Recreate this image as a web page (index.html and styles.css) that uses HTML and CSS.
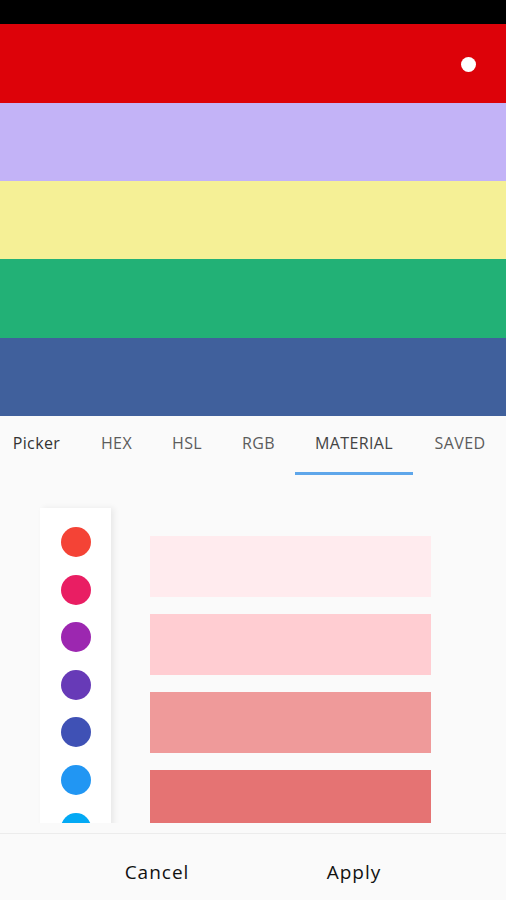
FILE: index.html
```html
<!DOCTYPE html>
<html>
<head>
<meta charset="utf-8">
<link rel="stylesheet" href="styles.css">
</head>
<body>
<div class="screen">
  <div class="status"></div>
  <div class="bands">
    <div class="band band-red"><span class="dot"></span></div>
    <div class="band band-lav"></div>
    <div class="band band-yel"></div>
    <div class="band band-grn"></div>
    <div class="band band-blu"></div>
  </div>
  <div class="tabs">
    <div class="tab tab-picker">Picker</div>
    <div class="tab tab-hex">HEX</div>
    <div class="tab tab-hsl">HSL</div>
    <div class="tab tab-rgb">RGB</div>
    <div class="tab tab-mat active">MATERIAL</div>
    <div class="tab tab-saved">SAVED</div>
  </div>
  <div class="content">
    <div class="sidebar">
      <span class="circle c-red"></span>
      <span class="circle c-pink"></span>
      <span class="circle c-purple"></span>
      <span class="circle c-dpurple"></span>
      <span class="circle c-indigo"></span>
      <span class="circle c-blue"></span>
      <span class="circle c-lblue"></span>
    </div>
    <div class="swatches">
      <div class="swatch s50"></div>
      <div class="swatch s100"></div>
      <div class="swatch s200"></div>
      <div class="swatch s300"></div>
      <div class="swatch s400"></div>
    </div>
  </div>
  <div class="actions">
    <div class="btn">Cancel</div>
    <div class="btn">Apply</div>
  </div>
</div>
</body>
</html>
```

FILE: styles.css
```css
* { box-sizing: border-box; }
html, body { margin: 0; padding: 0; }
body {
  width: 506px;
  height: 900px;
  overflow: hidden;
  background: #fafafa;
  font-family: "Open Sans", "Noto Sans", sans-serif;
}
.screen { display: flex; flex-direction: column; height: 900px; }
.status { height: 24px; background: #000; }
.bands { display: flex; flex-direction: column; }
.band { height: 78px; }
.band-red {
  height: 79px;
  background: #dd0209;
  display: flex;
  align-items: center;
  justify-content: flex-end;
  padding-right: 30px;
}
.dot { width: 15px; height: 15px; border-radius: 50%; background: #fff; margin-top: 1px; }
.band-lav { background: #c3b3f7; }
.band-yel { background: #f5f096; }
.band-grn { height: 79px; background: #22b176; }
.band-blu { background: #40609c; }

.tabs {
  height: 59px;
  display: flex;
  margin-left: -8px;
  background: #fafafa;
}
.tab {
  flex: none;
  display: flex;
  align-items: center;
  justify-content: center;
  padding-bottom: 3px;
  font-size: 16px;
  color: #5c5c5c;
  letter-spacing: 0.4px;
  border-bottom: 3px solid transparent;
}
.tab-picker { width: 89px; color: #333; }
.tab-hex { width: 71px; }
.tab-hsl { width: 70px; }
.tab-rgb { width: 73px; }
.tab-mat { width: 118px; }
.tab-saved { width: 94px; }
.tab.active { color: #444; border-bottom-color: #5ea6ea; }

.content {
  height: 348px;
  overflow: hidden;
  display: flex;
  align-items: flex-start;
  padding-left: 40px;
}
.sidebar {
  margin-top: 33px;
  width: 71px;
  height: 340px;
  background: #fff;
  box-shadow: 3px 0 6px rgba(0,0,0,0.07);
  display: flex;
  flex-direction: column;
  align-items: center;
  gap: 17.6px;
  padding-top: 19px;
}
.circle { flex: none; width: 30px; height: 30px; border-radius: 50%; }
.c-red { background: #f44336; }
.c-pink { background: #e91e63; }
.c-purple { background: #9c27b0; }
.c-dpurple { background: #673ab7; }
.c-indigo { background: #3f51b5; }
.c-blue { background: #2196f3; }
.c-lblue { background: #03a9f4; }

.swatches {
  margin-top: 61px;
  margin-left: 39px;
  width: 281px;
  display: flex;
  flex-direction: column;
  gap: 17px;
}
.swatch { height: 61px; }
.s50 { background: #ffebee; }
.s100 { background: #ffcdd2; }
.s200 { background: #ef9a9a; }
.s300 { background: #e57373; }
.s400 { background: #ef5350; }

.actions {
  margin-top: 10px;
  border-top: 1px solid #ececec;
  flex: 1;
  display: flex;
  align-items: center;
  gap: 77px;
  padding-left: 97px;
  padding-top: 10px;
}
.btn {
  width: 120px;
  text-align: center;
  font-size: 19px;
  font-weight: 500;
  color: #111;
  letter-spacing: 1px;
}
```
